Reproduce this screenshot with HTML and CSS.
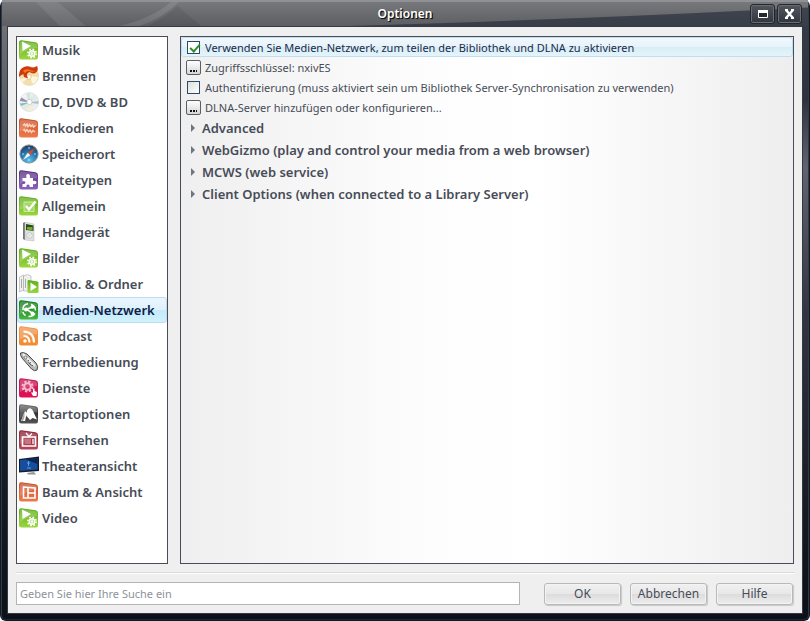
FILE: index.html
```html
<!DOCTYPE html>
<html lang="de">
<head>
  <meta charset="UTF-8">
  <meta name="viewport" content="width=device-width, initial-scale=1.0">
  <title>Optionen</title>
  <link rel="stylesheet" href="styles.css">
</head>
<body>
  <!-- Shared gradients and icons -->
  <svg class="defs" width="0" height="0" aria-hidden="true">
    <defs>
      <linearGradient id="green" x1="0" y1="0" x2="0" y2="1"><stop offset="0" stop-color="#5fae1c"/><stop offset="1" stop-color="#9ad63f"/></linearGradient>
      <linearGradient id="deepgreen" x1="0" y1="0" x2="0" y2="1"><stop offset="0" stop-color="#157a1c"/><stop offset="1" stop-color="#49b53f"/></linearGradient>
      <linearGradient id="orange" x1="0" y1="0" x2="0" y2="1"><stop offset="0" stop-color="#c9512c"/><stop offset="1" stop-color="#ee7a4a"/></linearGradient>
      <linearGradient id="amber" x1="0" y1="0" x2="0" y2="1"><stop offset="0" stop-color="#ee9a58"/><stop offset="1" stop-color="#f58a2a"/></linearGradient>
      <linearGradient id="purple" x1="0" y1="0" x2="0" y2="1"><stop offset="0" stop-color="#553080"/><stop offset="1" stop-color="#8d62bd"/></linearGradient>
      <linearGradient id="pink" x1="0" y1="0" x2="0" y2="1"><stop offset="0" stop-color="#c02058"/><stop offset="1" stop-color="#e20f55"/></linearGradient>
      <linearGradient id="gray" x1="0" y1="0" x2="0" y2="1"><stop offset="0" stop-color="#777"/><stop offset="0.5" stop-color="#333"/><stop offset="1" stop-color="#555"/></linearGradient>
      <linearGradient id="wine" x1="0" y1="0" x2="0" y2="1"><stop offset="0" stop-color="#8e2436"/><stop offset="1" stop-color="#b54458"/></linearGradient>
      <radialGradient id="globe" cx="0.5" cy="0.85" r="0.8"><stop offset="0" stop-color="#5cc4f0"/><stop offset="0.6" stop-color="#2472ab"/><stop offset="1" stop-color="#27415c"/></radialGradient>
      <linearGradient id="silver" x1="0" y1="0" x2="1" y2="1"><stop offset="0" stop-color="#fff"/><stop offset="0.5" stop-color="#e2e7e7"/><stop offset="1" stop-color="#f6f6f4"/></linearGradient>

      <symbol id="tile" viewBox="0 0 20 20">
        <path d="M0 2.500Q0 0 2.500 .3L16.500 2.300Q19 2.700 19 5V17Q19 19.500 17 19.500H2.500Q0 19.500 0 17Z"/>
        <path d="M1 3Q1 1 3 1.300L16 3.200Q18 3.500 18 5.500V8Q9 8 1 14Z" fill="#fff" fill-opacity=".2"/>
      </symbol>
      <symbol id="i-media" viewBox="0 0 20 20">
        <use href="#tile" fill="url(#green)"/>
        <path d="M3 1.500 12 6 3.500 11Z" fill="#fff"/>
        <circle cx="13" cy="13.500" r="4.200" fill="none" stroke="#fff" stroke-width="1.600" stroke-dasharray="1.700 1.600"/>
        <circle cx="13" cy="13.500" r="2.800" fill="#b5de7c" stroke="#fff" stroke-width="1.400"/>
        <circle cx="13" cy="13.500" r="1.200" fill="#fff"/>
      </symbol>
      <symbol id="disc" viewBox="0 0 20 20">
        <circle cx="10.200" cy="10" r="9.500" stroke="#d6d6d2" stroke-width=".6"/>
      </symbol>
      <symbol id="i-burn" viewBox="0 0 20 20">
        <use href="#disc" fill="#f3dfae"/>
        <path d="M10 10 19 11Q18 16 14 18Z" fill="#fff7dc"/>
        <path d="M10 11 3 17 1 13Z" fill="#fdf3d5"/>
        <circle cx="10" cy="11" r="2.300" fill="#fff" stroke="#d8b878" stroke-width=".7"/>
        <path d="M0 9Q0 3 5 1Q8-.500 12 1.200Q16 2 18-.2Q20 4 17 6.500Q15 8 12.500 7Q10 5.500 8.500 7.500Q7 9.500 9 12Q4 12 4.500 8Q2 9 0 11Z" fill="#cf3a0b"/>
        <path d="M4 5Q7 2 11 4Q15 6 17 4Q15 6.500 12 5.500Q8 4 6 7Z" fill="#f27a27"/>
      </symbol>
      <symbol id="i-cd" viewBox="0 0 20 20">
        <use href="#disc" fill="url(#silver)"/>
        <path d="M10.500 10.500 .9 9Q1 7.500 2.500 5.500Z" fill="#9b8bac"/>
        <path d="M10.500 10.500 .9 11.500 2 14Z" fill="#7cc0ba"/>
        <path d="M10.500 10.500 7 1.500 11 1Z" fill="#cfe6df"/>
        <path d="M10.500 10.500 19.500 9 19.200 12Z" fill="#a6c4d0"/>
        <path d="M10.500 10.500 8 19 14 18.500Z" fill="#f0efd8"/>
        <circle cx="10.500" cy="10" r="2.600" fill="#fff" stroke="#b9bfc0" stroke-width=".7"/>
      </symbol>
      <symbol id="i-encode" viewBox="0 0 20 20">
        <use href="#tile" fill="url(#orange)"/>
        <path d="M4 7.500 5.500 6 6.500 8 8 6 9 8.500 10.500 6.500 12 8.500 13.500 7 14.500 9 16.500 7.500M4 12.500 5.500 11.500 6.500 13.500 8 11.500 9.500 14 11 12 12.500 14.500 14 12.500 16 14" fill="none" stroke="#ffd2bd" stroke-width="1.500"/>
      </symbol>
      <symbol id="i-place" viewBox="0 0 20 20">
        <circle cx="10" cy="10" r="9.100" fill="url(#globe)" stroke="#8a959c"/>
        <path d="M10 3v2M10 15v2M3 10h2M15 10h2" stroke="#b9dff2"/>
        <path d="M16 4 11.300 11.300 8.700 8.700Z" fill="#e0472c"/>
        <path d="M4 16 8.700 8.700 11.300 11.300Z" fill="#f5f8fa"/>
      </symbol>
      <symbol id="i-types" viewBox="0 0 20 20">
        <use href="#tile" fill="url(#purple)"/>
        <path d="M3.500 8H7.500Q6.500 4 9 4T10.800 8H14V11Q17.500 10 17.500 12.500T14 14V17H10.500Q11 14.500 9 14.500T7.500 17H3.500V14Q6.500 14.300 6.500 12.500T3.500 11Z" fill="#fff"/>
      </symbol>
      <symbol id="i-general" viewBox="0 0 20 20">
        <use href="#tile" fill="url(#green)"/>
        <path d="M5 6H15V15.500H5Z" fill="#b5df7b" fill-opacity=".6" stroke="#cdeaa5"/>
        <path d="M7 10 10 13.500 16.500 5.500" fill="none" stroke="#fff" stroke-width="2.400"/>
      </symbol>
      <symbol id="i-handheld" viewBox="0 0 20 20">
        <path d="M4 1 6 0V18L4 17Z" fill="#777"/>
        <path d="M6 0 15 2V19L6 18Z" fill="#dfe1df" stroke="#b8bab8" stroke-width=".5"/>
        <path d="M7 2 14.500 3.500V9L7 8Z" fill="#2b4b16"/>
        <path d="M8 5 13.500 5V8.500L8 7.500Z" fill="#75ad31"/>
        <circle cx="10.500" cy="13.500" r="2.800" fill="#f6f6f6" stroke="#c2c4c2"/>
        <circle cx="10.500" cy="13.500" r="1" fill="#ccc"/>
      </symbol>
      <symbol id="i-library" viewBox="0 0 20 20">
        <path d="M.5 3 4.500 1V16L.5 18ZM4.500 2 8.500 .5 12 2V17H4.500Z" fill="#efefef" stroke="#b4b4b4" stroke-width=".7"/>
        <path d="M2.500 5v9M6.500 5v9" stroke="#aaa"/>
        <path d="M8.500 7Q8.500 6 9.500 6L18.500 7.500Q19.500 7.700 19.500 9V18Q19.500 19 18.500 19H9.500Q8.500 19 8.500 18Z" fill="url(#green)"/>
        <path d="M11.500 8.500 18 13 11.500 17Z" fill="#fff"/>
      </symbol>
      <symbol id="i-network" viewBox="0 0 20 20">
        <use href="#tile" fill="url(#deepgreen)"/>
        <path d="M4 10Q3.500 4.500 9 3.800M12 4.300Q16.500 6 16.500 10.500M16 13.500Q14 17 9.500 16.500M6.500 15.500Q4 14 4 12" fill="none" stroke="#fff" stroke-width="1.500"/>
        <path d="M14 6.800 7.500 9.500 14 13.500" fill="none" stroke="#fff" stroke-width="1.500"/>
        <circle cx="13.500" cy="6.800" r="1.900" fill="#fff"/><circle cx="7" cy="9.500" r="2.100" fill="#fff"/><circle cx="13.500" cy="13.500" r="2" fill="#fff"/>
      </symbol>
      <symbol id="i-podcast" viewBox="0 0 20 20">
        <use href="#tile" fill="url(#amber)"/>
        <path d="M4.500 10Q10.500 10 10.500 16.500M4.500 5.500Q15 6 15 16.500" fill="none" stroke="#fff" stroke-width="2.200"/>
        <circle cx="6" cy="15" r="1.800" fill="#fff"/>
      </symbol>
      <symbol id="i-remote" viewBox="0 0 20 20">
        <path d="M1.500 1Q4-.500 8 2L17 11Q20 15 18 18Q16 20 12.500 17L3 6Q1 3 1.500 1Z" fill="#b9b9b9" stroke="#3c3c3c" stroke-width=".9"/>
        <path d="M4 2 16 14" stroke="#f1f1f1" stroke-width="1.800"/>
        <circle cx="6.500" cy="5.500" r="1.400" fill="#eee" stroke="#555" stroke-width=".7"/>
        <path d="m9 8 1 1M11 10l1 1M13 13l1 1M9.500 10.500l3 3" stroke="#555" stroke-width=".9"/>
      </symbol>
      <symbol id="i-services" viewBox="0 0 20 20">
        <use href="#tile" fill="url(#pink)"/>
        <circle cx="8.500" cy="8.500" r="5" fill="none" stroke="#f8bcd0" stroke-width="2" stroke-dasharray="2.300 1.630"/>
        <circle cx="8.500" cy="8.500" r="3.300" fill="none" stroke="#f8bcd0" stroke-width="2"/>
        <path d="M14 18 12 14.500H14V10.500H15.500V13L18 14 17.500 18Z" fill="#fff"/>
      </symbol>
      <symbol id="i-start" viewBox="0 0 20 20">
        <use href="#tile" fill="url(#gray)"/>
        <path d="M2 17 6 7 8 9 6 17ZM8 6.500Q10.500 2.500 13.500 6L18 15.500 13.500 14 11 16 7.500 12Z" fill="#fff"/>
        <path d="M2 17 5.500 8 5.500 13 4 17Z" fill="#a8a8a8"/>
      </symbol>
      <symbol id="i-tv" viewBox="0 0 20 20">
        <use href="#tile" fill="url(#wine)"/>
        <path d="M7 3 10 6.500 13 3.500" fill="none" stroke="#fff" stroke-width="1.200"/>
        <path d="M3.500 7H16.500V16H3.500Z" fill="none" stroke="#fff" stroke-width="1.700"/>
        <path d="M5.500 9H12V14H5.500Z" fill="#c9737f"/>
        <path d="M14 9v5" stroke="#fff" stroke-width="1.300"/>
      </symbol>
      <symbol id="i-theater" viewBox="0 0 20 20">
        <path d="M0 3 20 .5V15L0 16.500Z" fill="#151c2b"/>
        <path d="M1 4 18.500 2V13.500L1 15Z" fill="#174d9d"/>
        <path d="M7 3.500 18.500 2V8Z" fill="#0b2552"/>
        <path d="M9.500 5v5M8 7h3M8 12h4" stroke="#5a9fe0"/>
        <path d="M8 17 15 16 17 18.500H9Z" fill="#8d949c"/>
      </symbol>
      <symbol id="i-tree" viewBox="0 0 20 20">
        <use href="#tile" fill="url(#orange)"/>
        <path d="M4.500 5 16 6V16H4.500ZM9 5.500V16M9 11H16" fill="none" stroke="#fff" stroke-width="1.600"/>
      </symbol>
    </defs>
  </svg>

  <div class="window">
    <header class="titlebar">
      <svg class="titlebar-art" viewBox="0 0 810 26" preserveAspectRatio="none" aria-hidden="true">
        <path d="M34 0H56L84 26H58Z" fill="#fff" fill-opacity=".08"/>
        <path d="M118 26Q150 18 170 0H178Q158 20 138 26Z" fill="#fff" fill-opacity=".1"/>
        <path d="M176 4 200 26H146Q166 16 176 4Z" fill="#000" fill-opacity=".08"/>
        <path d="M350 26Q600 18 810 6V26Z" fill="#2a303c" fill-opacity=".7"/>
      </svg>
      <h1 class="title">Optionen</h1>
      <div class="window-controls">
        <button type="button" class="window-btn" aria-label="Maximieren">
          <svg width="12" height="10" viewBox="0 0 12 10"><path d="M1.500 1.500H10.500V8.500H1.500Z" fill="#24272d" stroke="#fff"/><path d="M1 2.500H11" stroke="#fff" stroke-width="3"/></svg>
        </button>
        <button type="button" class="window-btn" aria-label="Schließen">
          <svg width="11" height="10" viewBox="0 0 11 10"><path d="M2 1 9 9M9 1 2 9" stroke="#fff" stroke-width="2.400"/><path d="M1 1H4M7 1H10M1 9H4M7 9H10" stroke="#fff" stroke-width="2"/></svg>
        </button>
      </div>
    </header>

    <main class="content">
      <div class="panels">
        <nav class="categories">
          <a class="category" href="#"><svg><use href="#i-media"/></svg>Musik</a>
          <a class="category" href="#"><svg><use href="#i-burn"/></svg>Brennen</a>
          <a class="category" href="#"><svg><use href="#i-cd"/></svg>CD, DVD &amp; BD</a>
          <a class="category" href="#"><svg><use href="#i-encode"/></svg>Enkodieren</a>
          <a class="category" href="#"><svg><use href="#i-place"/></svg>Speicherort</a>
          <a class="category" href="#"><svg><use href="#i-types"/></svg>Dateitypen</a>
          <a class="category" href="#"><svg><use href="#i-general"/></svg>Allgemein</a>
          <a class="category" href="#"><svg><use href="#i-handheld"/></svg>Handgerät</a>
          <a class="category" href="#"><svg><use href="#i-media"/></svg>Bilder</a>
          <a class="category" href="#"><svg><use href="#i-library"/></svg>Biblio. &amp; Ordner</a>
          <a class="category selected" href="#" aria-current="page"><svg><use href="#i-network"/></svg>Medien-Netzwerk</a>
          <a class="category" href="#"><svg><use href="#i-podcast"/></svg>Podcast</a>
          <a class="category" href="#"><svg><use href="#i-remote"/></svg>Fernbedienung</a>
          <a class="category" href="#"><svg><use href="#i-services"/></svg>Dienste</a>
          <a class="category" href="#"><svg><use href="#i-start"/></svg>Startoptionen</a>
          <a class="category" href="#"><svg><use href="#i-tv"/></svg>Fernsehen</a>
          <a class="category" href="#"><svg><use href="#i-theater"/></svg>Theateransicht</a>
          <a class="category" href="#"><svg><use href="#i-tree"/></svg>Baum &amp; Ansicht</a>
          <a class="category" href="#"><svg><use href="#i-media"/></svg>Video</a>
        </nav>

        <section class="settings">
          <div class="option active">
            <input type="checkbox" id="useNetwork" checked>
            <label for="useNetwork">Verwenden Sie Medien-Netzwerk, zum teilen der Bibliothek und DLNA zu aktivieren</label>
          </div>
          <div class="option">
            <button type="button" class="more-btn" id="accessKey" aria-labelledby="accessKeyLabel"></button>
            <label for="accessKey" id="accessKeyLabel">Zugriffsschlüssel: nxivES</label>
          </div>
          <div class="option">
            <input type="checkbox" id="auth">
            <label for="auth">Authentifizierung (muss aktiviert sein um Bibliothek Server-Synchronisation zu verwenden)</label>
          </div>
          <div class="option">
            <button type="button" class="more-btn" id="dlna" aria-labelledby="dlnaLabel"></button>
            <label for="dlna" id="dlnaLabel">DLNA-Server hinzufügen oder konfigurieren...</label>
          </div>
          <details class="group"><summary>Advanced</summary></details>
          <details class="group"><summary>WebGizmo (play and control your media from a web browser)</summary></details>
          <details class="group"><summary>MCWS (web service)</summary></details>
          <details class="group"><summary>Client Options (when connected to a Library Server)</summary></details>
        </section>
      </div>

      <footer class="footer">
        <input type="text" class="search" aria-label="Suche" placeholder="Geben Sie hier Ihre Suche ein">
        <div class="actions">
          <button type="button" class="btn">OK</button>
          <button type="button" class="btn">Abbrechen</button>
          <button type="button" class="btn">Hilfe</button>
        </div>
      </footer>
    </main>
  </div>
</body>
</html>
```
FILE: styles.css
```css
* {
  margin: 0;
  padding: 0;
  box-sizing: border-box;
  font-family: "Noto Sans", "Open Sans", sans-serif;
}

body {
  background: #fff;
  color: #474c57;
  font-size: 11px;
}

.defs {
  position: absolute;
}

/* Window frame */
.window {
  display: flex;
  flex-direction: column;
  min-height: 100vh;
  padding: 0 7px 7px;
  border-radius: 6px;
  background:
    linear-gradient(#3a3e48, #2e323c 16%, #60656d 27%, #34363f 50%, #14181f 85%, #0b1117) right / 50% 100% no-repeat,
    linear-gradient(#77787b, #5a5e66 16%, #3a434f 32%, #1c2734 50%, #121820 85%, #0b1117);
  box-shadow: inset 0 0 0 1px #15191f, inset 0 2px 0 #97989b, inset 2px 0 0 #2c3a4a, inset -2px 0 0 #2c3a4a, inset 0 -2px 0 #14273b;
}

/* Title bar */
.titlebar {
  position: relative;
  display: flex;
  align-items: center;
  justify-content: center;
  height: 26px;
  margin: 0 -5px;
  border-top: 2px solid #909194;
  background: linear-gradient(#77787b, #5c5e63);
}

.titlebar-art {
  position: absolute;
  inset: 0;
  width: 100%;
  height: 100%;
}

.title {
  position: relative;
  color: #fff;
  font-size: 12px;
  font-weight: 600;
  line-height: 20px;
  text-shadow: 1px 1px 1px #111, 1px 1px 0 #222;
}

.window-controls {
  position: absolute;
  top: 2px;
  right: 6px;
  display: flex;
  gap: 2px;
}

.window-btn {
  display: flex;
  align-items: center;
  justify-content: center;
  width: 25px;
  height: 20px;
  border: 1px solid #22262d;
  border-radius: 3px;
  background: linear-gradient(#54565c, #30353f);
  box-shadow: inset 0 0 0 1px #696d75;
}

/* Content area */
.content {
  display: flex;
  flex: 1;
  flex-direction: column;
  padding: 9px 8px 8px;
  border: 1px solid #343a44;
  background: #efefef;
}

.panels {
  display: flex;
  flex: 1;
  gap: 12px;
}

/* Category list */
.categories {
  flex: none;
  width: 152px;
  border: 1px solid #474e5a;
  background: #fff;
}

.category {
  display: flex;
  align-items: center;
  gap: 3px;
  height: 26px;
  padding-left: 1px;
  border: 1px solid transparent;
  border-radius: 3px;
  color: #474c57;
  font-size: 13px;
  font-weight: 600;
  text-decoration: none;
  white-space: nowrap;
}

.category svg {
  flex: none;
  width: 20px;
  height: 20px;
}

.category.selected {
  border-color: #bddcf0;
  background: linear-gradient(#eaf6fe, #dff1fc 50%, #c6e9fb 51%, #d0f2fd);
  color: #0c2148;
}

/* Settings */
.settings {
  flex: 1;
  border: 1px solid #474e5a;
  background: linear-gradient(90deg, #efefef, #fdfdfd 40%, #fff 58%, #eee);
}

.option {
  display: flex;
  align-items: center;
  gap: 4px;
  height: 20px;
  padding-left: 4px;
  border: 1px solid transparent;
  border-radius: 3px;
  white-space: nowrap;
}

.option.active {
  border-color: #c3dcee;
  background: linear-gradient(#f1f8fd, #e6f2fa 50%, #d8edf5 51%, #e3f5fb);
  color: #1a2a4b;
}

.option input {
  width: 13px;
  height: 13px;
  margin: 0 1px;
  appearance: none;
  border: 1px solid #2b4b6c;
  background: linear-gradient(135deg, #dcdfda, #fff);
}

.option input:checked {
  background: #fff;
}

.option input:checked::before {
  content: "";
  display: block;
  width: 4px;
  height: 8px;
  margin-left: 4px;
  border: solid #2a8f28;
  border-width: 0 2px 2px 0;
  transform: rotate(42deg);
}

.more-btn {
  width: 15px;
  height: 15px;
  padding: 9px 3px 2px;
  border: 1px solid #5b5e63;
  border-radius: 2px;
  background: linear-gradient(#fff, #d5d5d5);
}

.more-btn::before {
  content: "";
  display: block;
  height: 2px;
  background: repeating-linear-gradient(90deg, #111 0 2px, transparent 2px 3px);
}

.group summary {
  display: flex;
  align-items: center;
  gap: 7px;
  height: 22px;
  padding-left: 10px;
  font-size: 13px;
  font-weight: 600;
  list-style: none;
  white-space: nowrap;
}

.group summary::before {
  content: "";
  border: 4px solid transparent;
  border-right-width: 0;
  border-left-color: #6f7680;
}

/* Footer */
.footer {
  display: flex;
  align-items: center;
  gap: 24px;
  margin-top: 8px;
  padding-top: 9px;
  border-top: 1px solid #dadada;
  box-shadow: inset 0 1px 0 #fff;
}

.search {
  flex: 1;
  min-width: 0;
  height: 23px;
  padding: 0 3px;
  border: 1px solid #b5b5b5;
  background: #fff;
  font-size: 11px;
}

.search::placeholder {
  color: #8d929b;
}

.actions {
  display: flex;
  gap: 9px;
  padding-right: 1px;
}

.btn {
  width: 77px;
  height: 22px;
  border: 1px solid #b9b9b9;
  border-radius: 3px;
  background: linear-gradient(#f0f0f0, #e8e8e8 48%, #dcdcdc 50%, #ececec);
  box-shadow: inset 0 0 0 1px #f3f3f3, 1px 1px 1px #c8c8c8;
  color: #474c57;
  font-size: 12px;
}
```
